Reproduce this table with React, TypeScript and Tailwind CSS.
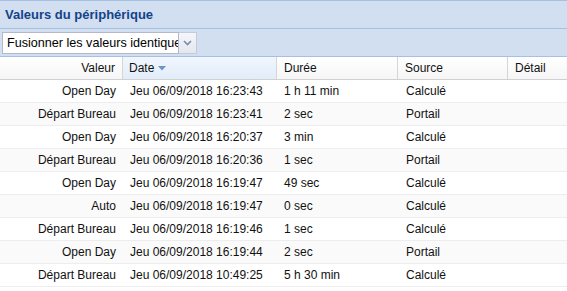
import React from 'react';

const rows = [
  { valeur: 'Open Day', date: 'Jeu 06/09/2018 16:23:43', duree: '1 h 11 min', source: 'Calculé' },
  { valeur: 'Départ Bureau', date: 'Jeu 06/09/2018 16:23:41', duree: '2 sec', source: 'Portail' },
  { valeur: 'Open Day', date: 'Jeu 06/09/2018 16:20:37', duree: '3 min', source: 'Calculé' },
  { valeur: 'Départ Bureau', date: 'Jeu 06/09/2018 16:20:36', duree: '1 sec', source: 'Portail' },
  { valeur: 'Open Day', date: 'Jeu 06/09/2018 16:19:47', duree: '49 sec', source: 'Calculé' },
  { valeur: 'Auto', date: 'Jeu 06/09/2018 16:19:47', duree: '0 sec', source: 'Calculé' },
  { valeur: 'Départ Bureau', date: 'Jeu 06/09/2018 16:19:46', duree: '1 sec', source: 'Calculé' },
  { valeur: 'Open Day', date: 'Jeu 06/09/2018 16:19:44', duree: '2 sec', source: 'Portail' },
  { valeur: 'Départ Bureau', date: 'Jeu 06/09/2018 10:49:25', duree: '5 h 30 min', source: 'Calculé' },
];

export default function App() {
  return <div className="w-[567px] h-[291px] overflow-hidden bg-white text-[12px] text-[#111]" style={{ fontFamily: '"Liberation Sans", Arial, sans-serif' }}>
      {/* panel title */}
      <div className="h-[29px] flex items-center px-[5px] bg-[#d1dff0] border-t border-b border-[#a6c0e3]">
        <span className="font-bold text-[13px] text-[#15428b]">Valeurs du périphérique</span>
      </div>

      {/* toolbar */}
      <div className="h-[28px] flex items-center pl-[2px] bg-[#d1dff0] border-b border-[#a6c0e3]">
        <div className="flex h-[22px]">
          <div className="w-[177px] border border-[#b5b8c8] bg-white pl-[4px] overflow-hidden whitespace-nowrap leading-[20px] text-[12.6px] text-[#000]">
            Fusionner les valeurs identiques
          </div>
          <div className="w-[18px] border border-l-0 border-[#c3cbd8] bg-gradient-to-b from-[#f4f6fa] to-[#e3e8ef] flex items-center justify-center">
            <svg width="9" height="6" viewBox="0 0 9 6">
              <path d="M1 1 L4.5 4.5 L8 1" fill="none" stroke="#7d8ca6" strokeWidth="1.6" />
            </svg>
          </div>
        </div>
      </div>

      {/* header */}
      <div className="flex h-[23px] bg-gradient-to-b from-white to-[#f6f6f6] border-b border-[#d0d0d0] leading-[22px]">
        <div className="w-[123px] shrink-0 border-r border-[#d5d5d5] text-right pr-[7px]">Valeur</div>
        <div className="w-[154px] shrink-0 border-r border-[#d5d5d5] pl-[6px] flex items-center gap-[4px] bg-gradient-to-b from-[#f0f6fd] to-[#e2edfa]">
          <span>Date</span>
          <svg width="8" height="5" viewBox="0 0 8 5" className="mt-[1px]">
            <path d="M0 0 H8 L4 4.5 Z" fill="#6f93c9" />
          </svg>
        </div>
        <div className="w-[121px] shrink-0 border-r border-[#d5d5d5] pl-[7px]">Durée</div>
        <div className="w-[110px] shrink-0 border-r border-[#d5d5d5] pl-[7px]">Source</div>
        <div className="flex-1 pl-[7px]">Détail</div>
      </div>

      {/* rows */}
      {rows.map((row, i) => <div key={i} className={`flex h-[23px] leading-[22px] border-b border-[#ededed] ${i % 2 === 1 ? 'bg-[#fafafa]' : 'bg-white'}`}>
          <div className="w-[123px] shrink-0 text-right pr-[7px] whitespace-nowrap">{row.valeur}</div>
          <div className="w-[154px] shrink-0 pl-[7px] whitespace-nowrap">{row.date}</div>
          <div className="w-[121px] shrink-0 pl-[7px] whitespace-nowrap">{row.duree}</div>
          <div className="w-[110px] shrink-0 pl-[8px] whitespace-nowrap">{row.source}</div>
          <div className="flex-1" />
        </div>)}
    </div>;
}
